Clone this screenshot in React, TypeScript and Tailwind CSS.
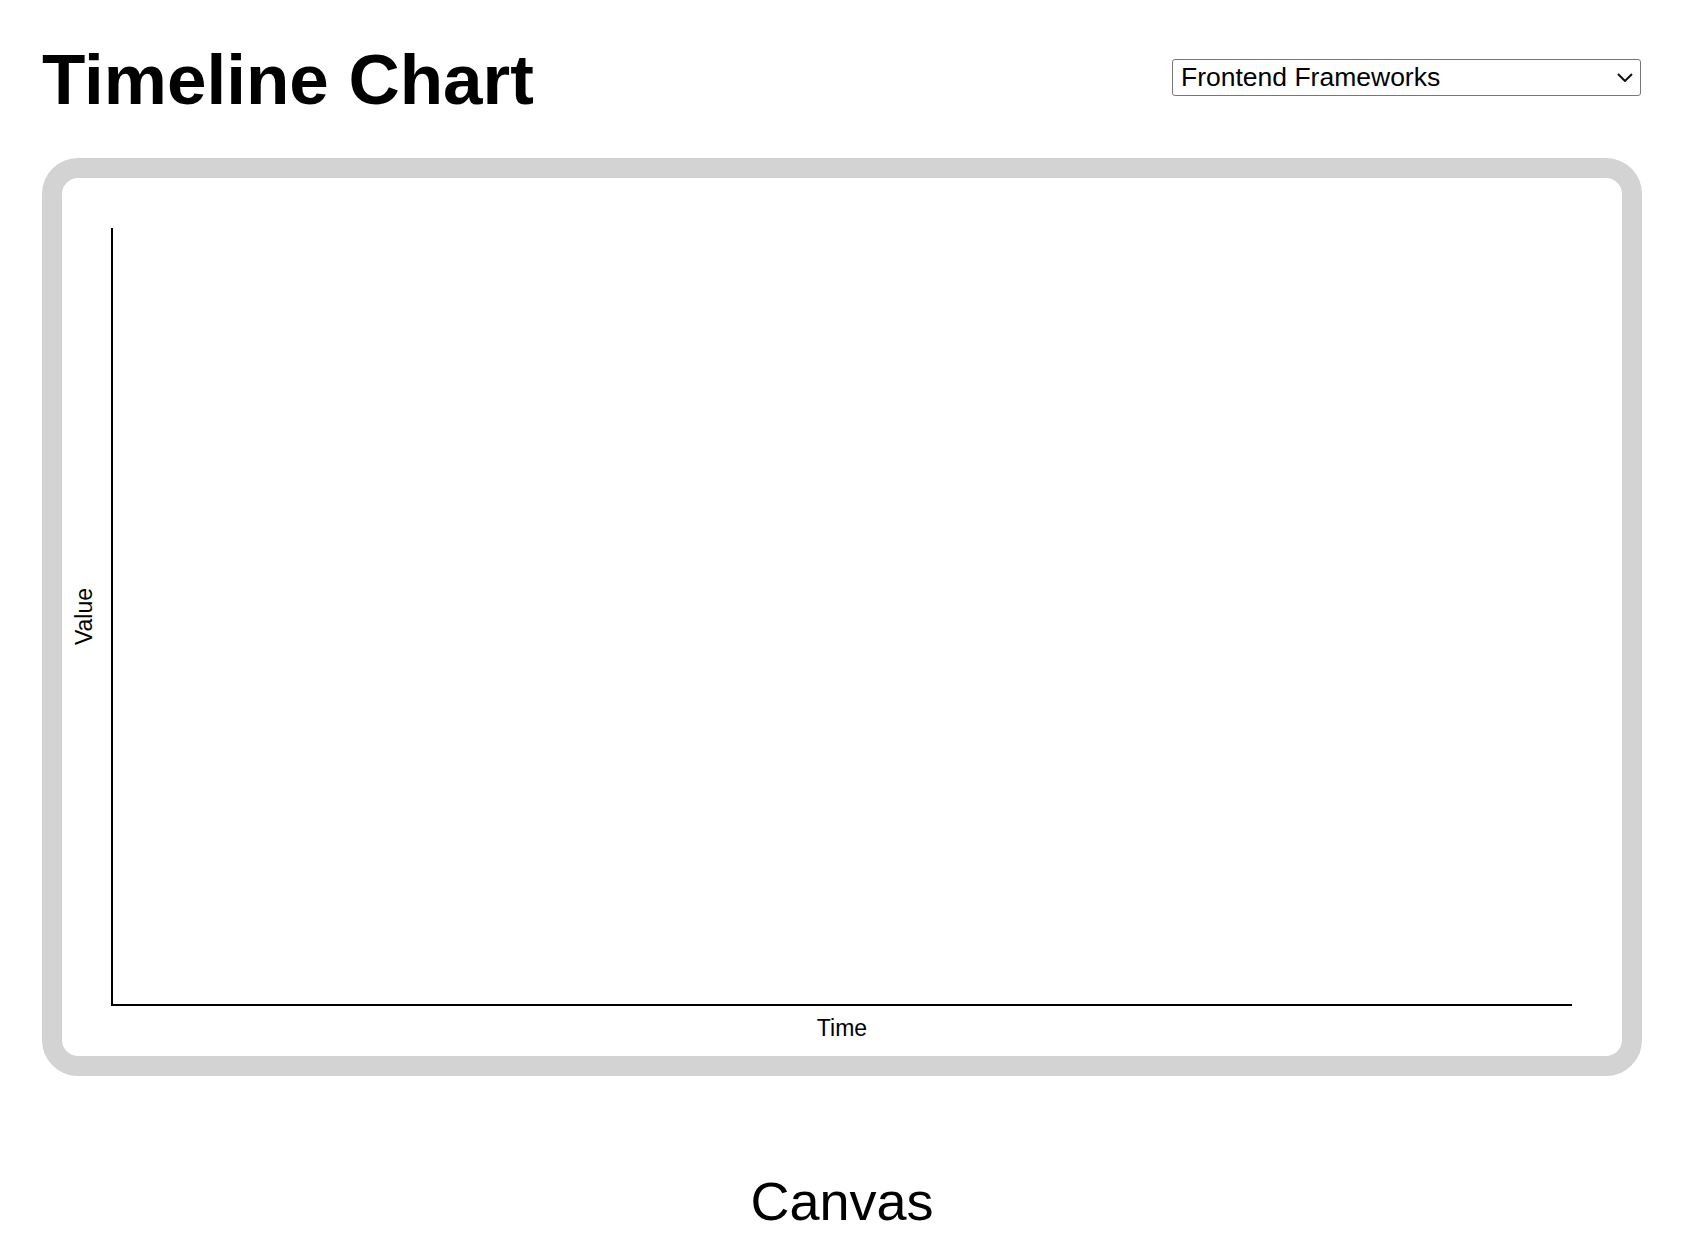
import { useState } from "react";

const datasets = ["Frontend Frameworks", "Backend Frameworks", "Databases"];

function TimelineChart() {
  const width = 1560;
  const height = 878;
  const margin = 50;
  const plotW = width - margin * 2;
  const plotH = 777;

  return (
    <svg width={width} height={height} className="block">
      <line x1={margin} y1={margin} x2={margin} y2={margin + plotH} stroke="#000" strokeWidth={2} />
      <line x1={margin - 1} y1={margin + plotH} x2={margin + plotW} y2={margin + plotH} stroke="#000" strokeWidth={2} />
      <text
        x={margin + plotW / 2}
        y={858}
        textAnchor="middle"
        fontSize={23}
        fontFamily="'Liberation Sans', Arial, sans-serif"
      >
        Time
      </text>
      <text
        transform={`translate(30, ${margin + plotH / 2}) rotate(-90)`}
        textAnchor="middle"
        fontSize={23}
        fontFamily="'Liberation Sans', Arial, sans-serif"
      >
        Value
      </text>
    </svg>
  );
}

export default function App() {
  const [dataset, setDataset] = useState(datasets[0]);

  return (
    <div className="min-h-[1260px] bg-white pt-[44px] font-['Liberation_Sans',Arial,sans-serif] text-black">
      <div className="ml-[42px] w-[1600px]">
        <div className="flex h-[70px] items-center justify-between">
          <h1 className="text-[71px] font-bold leading-none">Timeline Chart</h1>
          <div className="relative mr-px -mt-[3px]">
            <select
              value={dataset}
              onChange={(e) => setDataset(e.target.value)}
              className="block h-[37px] w-[469px] appearance-none rounded-[3px] border border-[#767676] bg-white pl-[8px] text-[26.5px] leading-none text-black outline-none"
            >
              {datasets.map((d) => (
                <option key={d} value={d}>
                  {d}
                </option>
              ))}
            </select>
            <svg
              className="pointer-events-none absolute right-[8px] top-[14px]"
              width="16"
              height="9"
              viewBox="0 0 16 9"
              fill="none"
            >
              <path d="M1 1l7 7 7-7" stroke="#111" strokeWidth="2" />
            </svg>
          </div>
        </div>

        <div className="mt-[44px] rounded-[36px] border-[20px] border-[#d3d3d3] bg-white">
          <TimelineChart />
        </div>

        <h2 className="mt-[98px] text-center text-[54px] font-normal leading-none">Canvas</h2>
      </div>
    </div>
  );
}
